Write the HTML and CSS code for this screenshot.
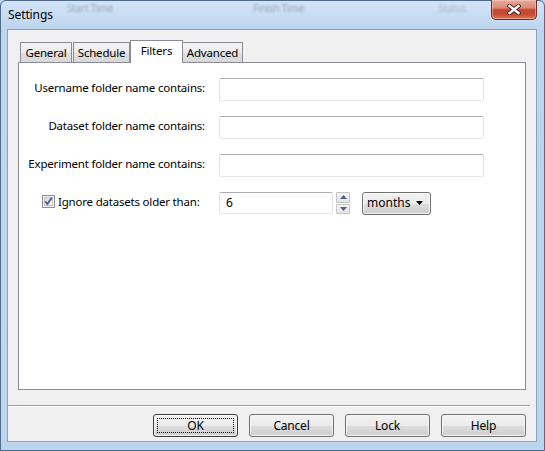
FILE: index.html
```html
<!DOCTYPE html>
<html>
<head>
<meta charset="utf-8">
<link rel="stylesheet" href="styles.css">
</head>
<body>
<div class="window">
  <div class="titlebar">
    <span class="title">Settings</span>
    <span class="ghost ghost-1">Start Time</span>
    <span class="ghost ghost-2">Finish Time</span>
    <span class="ghost ghost-3">Status</span>
    <div class="close">
      <svg width="14" height="11" viewBox="0 0 14 11">
        <path d="M2.5 2 L11.5 9 M11.5 2 L2.5 9" stroke="#4a2018" stroke-width="4.2" stroke-linecap="square" fill="none"/>
        <path d="M2.5 2 L11.5 9 M11.5 2 L2.5 9" stroke="#ffffff" stroke-width="2.4" stroke-linecap="square" fill="none"/>
      </svg>
    </div>
  </div>
  <div class="client">
    <div class="tabs">
      <div class="tab tab-general">General</div>
      <div class="tab tab-schedule">Schedule</div>
      <div class="tab tab-filters selected">Filters</div>
      <div class="tab tab-advanced">Advanced</div>
    </div>
    <div class="panel">
      <div class="form">
        <label class="label">Username folder name contains:</label>
        <div class="field"><div class="textbox"></div></div>
        <label class="label">Dataset folder name contains:</label>
        <div class="field"><div class="textbox"></div></div>
        <label class="label">Experiment folder name contains:</label>
        <div class="field"><div class="textbox"></div></div>
        <label class="check-label">
          <span class="checkbox">
            <svg width="13" height="13" viewBox="0 0 13 13">
              <defs>
                <linearGradient id="cbg" x1="0" y1="0" x2="1" y2="1">
                  <stop offset="0" stop-color="#d6d6d6"/>
                  <stop offset="1" stop-color="#ffffff"/>
                </linearGradient>
              </defs>
              <rect x="0.5" y="0.5" width="12" height="12" fill="#f4f4f4" stroke="#8e8f8f"/>
              <rect x="2.5" y="2.5" width="8" height="8" fill="url(#cbg)" stroke="#c6c6c6"/>
              <path d="M3.2 6.4 L5.4 9 L9.8 2.8" stroke="#4a5e96" stroke-width="1.9" fill="none"/>
            </svg>
          </span>
          <span>Ignore datasets older than:</span>
        </label>
        <div class="field field-row">
          <div class="textbox textbox-num">6</div>
          <div class="spinner">
            <div class="spin spin-up">
              <svg width="7" height="4" viewBox="0 0 7 4"><path d="M0 4 L3.5 0 L7 4 Z" fill="#4d6082"/></svg>
            </div>
            <div class="spin spin-down">
              <svg width="7" height="4" viewBox="0 0 7 4"><path d="M0 0 L3.5 4 L7 0 Z" fill="#4d6082"/></svg>
            </div>
          </div>
          <div class="combo">
            <span>months</span>
            <svg width="7" height="4" viewBox="0 0 7 4"><path d="M0 0 L7 0 L3.5 4 Z" fill="#000"/></svg>
          </div>
        </div>
      </div>
    </div>
    <div class="separator"></div>
    <div class="buttons">
      <div class="btn btn-default"><span class="focus">OK</span></div>
      <div class="btn">Cancel</div>
      <div class="btn">Lock</div>
      <div class="btn">Help</div>
    </div>
  </div>
</div>
</body>
</html>
```
FILE: styles.css
```css
* { box-sizing: border-box; }

html, body {
  margin: 0;
  padding: 0;
  background: #bcd4ee;
}

body {
  width: 545px;
  height: 451px;
  overflow: hidden;
  font-family: "Noto Sans", "Open Sans", sans-serif;
  font-size: 11.5px;
  letter-spacing: -0.2px;
  color: #000;
}

.window {
  width: 545px;
  height: 451px;
  border: 1px solid #4f6b8c;
  border-radius: 6px 6px 0 0;
  background: linear-gradient(180deg, #d3e3f5 0px, #c8dcf2 14px, #bdd5ef 28px, #bcd4ee 100%);
  display: flex;
  flex-direction: column;
  padding: 0 7px 8px 6px;
}

.titlebar {
  height: 28px;
  display: flex;
  align-items: flex-start;
  flex: none;
}

.title {
  padding: 6px 0 0 1px;
  line-height: 16px;
  font-size: 12px;
  letter-spacing: -0.1px;
  color: #000;
}

.ghost {
  margin-top: 1px;
  line-height: 12px;
  font-size: 10px;
  color: rgba(60, 78, 100, 0.4);
  filter: blur(1.2px);
  white-space: nowrap;
}
.ghost-1 { margin-left: 14px; }
.ghost-2 { margin-left: 140px; }
.ghost-3 { margin-left: 134px; opacity: 0.7; }

.close {
  margin-left: auto;
  margin-top: -1px;
  width: 46px;
  height: 20px;
  border: 1px solid #6e3026;
  border-top: none;
  border-radius: 0 0 5px 5px;
  background: linear-gradient(180deg, #e9ab9c 0%, #dc8a78 40%, #c7472f 52%, #c54a33 75%, #dc7a5e 100%);
  box-shadow: inset 0 0 0 1px rgba(255, 210, 200, 0.45);
  display: flex;
  align-items: center;
  justify-content: center;
}

.client {
  flex: 1;
  background: #f0f0f0;
  border: 1px solid #8aa2be;
  display: flex;
  flex-direction: column;
  padding: 10px 10px 4px 10px;
}

.tabs {
  height: 22px;
  display: flex;
  align-items: flex-end;
  flex: none;
}

.tab {
  height: 20px;
  border: 1px solid #898c95;
  border-bottom: none;
  background: linear-gradient(180deg, #f3f3f3 0%, #ebebeb 50%, #dfdfdf 51%, #d8d8d8 100%);
  padding-top: 1px;
  line-height: 18px;
  text-align: center;
  white-space: nowrap;
}
.tab-general { margin-left: 2px; width: 52px; }
.tab-schedule { margin-left: 1px; width: 57px; }
.tab-filters { width: 53px; }
.tab-advanced { margin-left: -1px; width: 61px; }

.tab.selected {
  height: 23px;
  margin-bottom: -1px;
  background: #ffffff;
  position: relative;
  z-index: 1;
}

.panel {
  height: 328px;
  flex: none;
  background: #ffffff;
  border: 1px solid #898c95;
}

.form {
  display: grid;
  grid-template-columns: 186px 265px;
  grid-auto-rows: 23px;
  column-gap: 14px;
  row-gap: 15px;
  padding-top: 15px;
}

.label {
  display: flex;
  align-items: center;
  justify-content: flex-end;
  padding-bottom: 4px;
  white-space: nowrap;
}

.check-label {
  display: flex;
  align-items: center;
  gap: 3px;
  margin-left: 23px;
  padding-bottom: 4px;
  white-space: nowrap;
}

.checkbox {
  display: flex;
  width: 13px;
  height: 13px;
}

.field {
  display: flex;
}

.textbox {
  width: 265px;
  height: 23px;
  border: 1px solid #e2e3ea;
  border-top-color: #abadb3;
  border-bottom-color: #e3e9ef;
  border-radius: 2px;
  background: #fff;
}

.field-row {
  align-items: flex-start;
}

.textbox-num {
  width: 114px;
  height: 22px;
  padding-left: 6px;
  line-height: 20px;
  font-size: 12px;
}

.spinner {
  margin-left: 3px;
  width: 14px;
  height: 22px;
  display: flex;
  flex-direction: column;
  gap: 1px;
}

.spin {
  flex: 1;
  border: 1px solid #c3c3c3;
  border-radius: 1px;
  background: linear-gradient(180deg, #f6f6f6, #e4e4e4);
  display: flex;
  align-items: center;
  justify-content: center;
}

.combo {
  margin-left: 12px;
  width: 69px;
  height: 23px;
  border: 1px solid #707070;
  border-radius: 3px;
  background: linear-gradient(180deg, #f2f2f2 0%, #ebebeb 50%, #dddddd 51%, #cfcfcf 100%);
  box-shadow: inset 0 0 0 1px rgba(255, 255, 255, 0.7);
  display: flex;
  align-items: center;
  justify-content: space-between;
  padding: 0 7px 1px 4px;
  line-height: 16px;
  font-size: 12px;
  letter-spacing: 0;
}

.separator {
  flex: none;
  height: 2px;
  margin: 15px -4px 0 -10px;
  border-top: 1px solid #a0a0a0;
  border-bottom: 1px solid #ffffff;
}

.buttons {
  flex: none;
  display: flex;
  justify-content: flex-end;
  gap: 11px;
  margin-top: 7px;
}

.btn {
  width: 85px;
  height: 23px;
  border: 1px solid #707070;
  border-radius: 3px;
  background: linear-gradient(180deg, #f2f2f2 0%, #ebebeb 50%, #dddddd 51%, #cfcfcf 100%);
  box-shadow: inset 0 0 0 1px rgba(252, 252, 252, 0.75);
  display: flex;
  align-items: center;
  justify-content: center;
  padding-bottom: 1px;
  font-size: 12px;
}

.btn-default {
  border-color: #3c3c3c;
  padding: 3px;
}

.focus {
  flex: 1;
  align-self: stretch;
  display: flex;
  align-items: center;
  justify-content: center;
  border: 1px dotted #000;
}
```
